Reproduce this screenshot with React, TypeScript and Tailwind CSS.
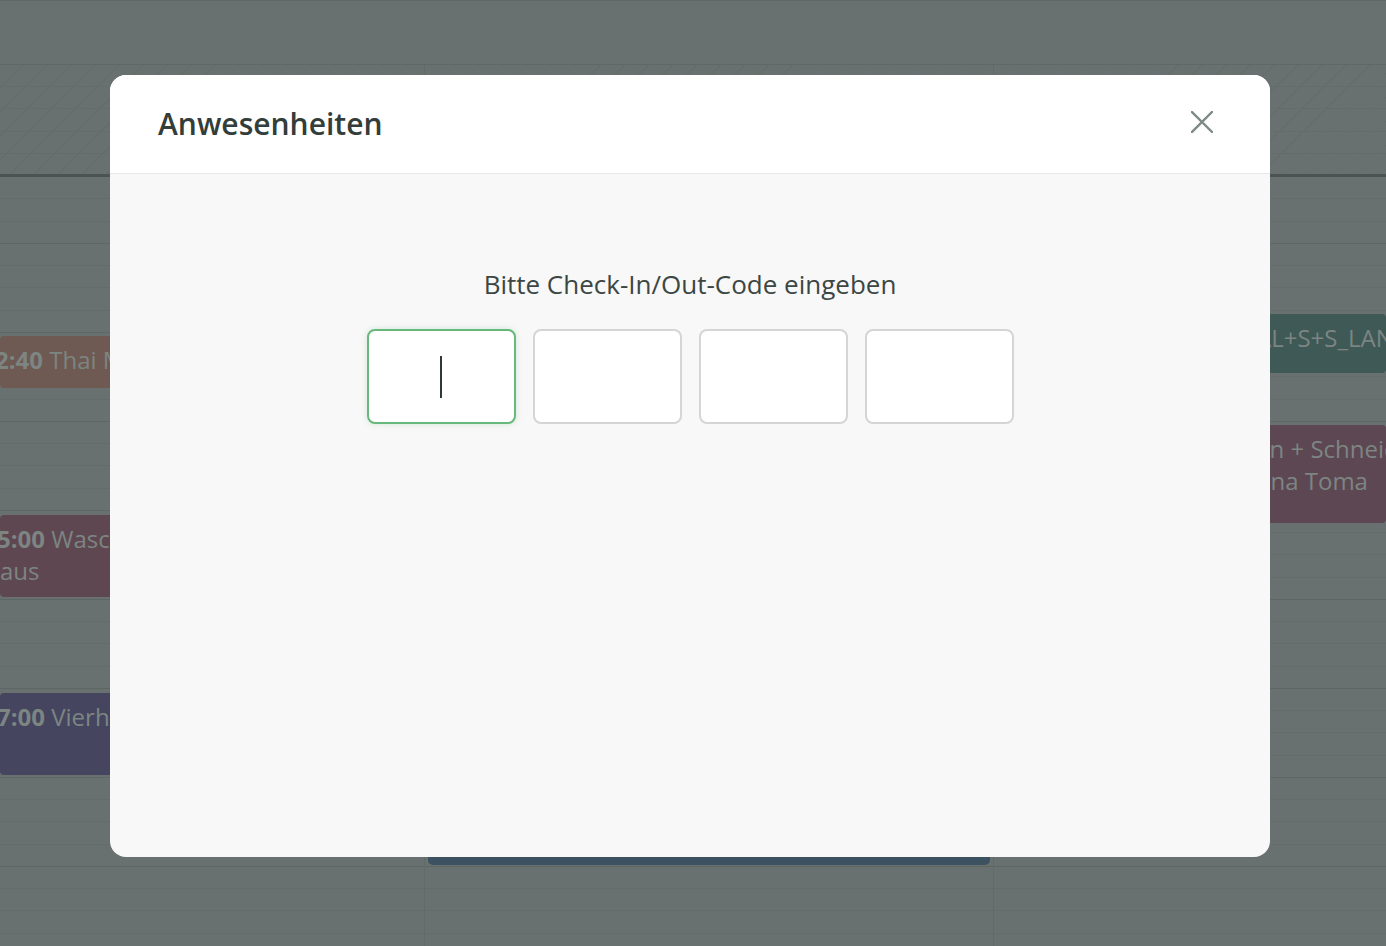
import React from "react";

const BODY_ROWS = Array.from({ length: 35 }, (_, i) => i);

function EventBlock({
  className,
  lines,
}: {
  className: string;
  lines: { time?: string; text: string; offset: string }[];
}) {
  return (
    <div className={`absolute overflow-hidden rounded-[4px] pt-[8px] text-[24px] leading-[32px] text-[#7c8582] ${className}`}>
      {lines.map((l, i) => (
        <div key={i} className={`whitespace-nowrap ${l.offset}`}>
          {l.time && <span className="font-bold">{l.time} </span>}
          {l.text}
        </div>
      ))}
    </div>
  );
}

export default function App() {
  return (
    <div className="relative h-[946px] w-[1386px] overflow-hidden bg-[#687170] font-['Open_Sans',sans-serif]">
      {/* Calendar background */}
      <div className="flex flex-col">
        <div className="h-[65px] shrink-0 border-y border-[#5f6865]" />
        <div className="relative">
          <div className="h-[109px] bg-[repeating-linear-gradient(135deg,transparent_0px,transparent_16px,#646d6a_16px,#646d6a_17px)]">
            <div className="h-[22px] border-b border-[#646d6a]" />
            <div className="h-[22px] border-b border-[#646d6a]" />
            <div className="h-[23px] border-b border-[#646d6a]" />
            <div className="h-[22px] border-b border-[#646d6a]" />
          </div>
          <div className="h-[3px] bg-[#4c5451]" />
          {BODY_ROWS.map((i) => (
            <div
              key={i}
              className={`h-[22.25px] border-b ${i % 4 === 2 ? "border-[#5d6663]" : "border-[#636c69]"}`}
            />
          ))}

          {/* columns with events */}
          <div className="absolute inset-0 grid grid-cols-[424px_569px_1fr]">
            <div className="relative">
              <EventBlock
                className="left-0 right-[4px] top-[271px] h-[52px] bg-[#6f5953]"
                lines={[{ time: "2:40", text: "Thai Massage", offset: "-ml-[5px]" }]}
              />
              <EventBlock
                className="left-0 right-[4px] top-[450px] h-[82px] bg-[#5e4751]"
                lines={[
                  { time: "5:00", text: "Waschküche Gemeinde-", offset: "-ml-[3px]" },
                  { text: "aus", offset: "ml-0" },
                ]}
              />
              <EventBlock
                className="left-0 right-[4px] top-[628px] h-[82px] bg-[#45455f]"
                lines={[{ time: "7:00", text: "Vierhändig Klavier", offset: "-ml-[3px]" }]}
              />
            </div>
            <div className="relative border-l border-[#636b68]">
              <div className="absolute left-[3px] right-[3px] top-[535px] h-[265px] rounded-[5px] bg-[#3d5261]" />
            </div>
            <div className="relative border-l border-[#636b68]">
              <EventBlock
                className="left-[3px] right-0 top-[249px] h-[59px] bg-[#3f5957]"
                lines={[{ text: "AL+S+S_LAND", offset: "ml-[259px]" }]}
              />
              <EventBlock
                className="left-[3px] right-0 top-[360px] h-[98px] bg-[#5d4752]"
                lines={[
                  { text: "en + Schneider", offset: "ml-[259px]" },
                  { text: "ona Toma", offset: "ml-[259px]" },
                ]}
              />
            </div>
          </div>
        </div>
      </div>

      {/* Modal */}
      <div className="absolute inset-0 flex pl-[110px] pt-[75px]">
        <div className="flex h-[782px] w-[1160px] flex-col overflow-hidden rounded-2xl bg-[#f8f8f8]">
          <div className="flex h-[99px] shrink-0 items-center justify-between border-b border-[#e6e7e7] bg-white pl-12 pr-[57px]">
            <h2 className="text-[30px] font-semibold leading-[40px] text-[#333d3a]">Anwesenheiten</h2>
            <svg width="22" height="22" viewBox="0 0 22 22" className="-mt-[4px]" fill="none">
              <path d="M1 1L21 21M21 1L1 21" stroke="#7d8a87" strokeWidth="2.4" strokeLinecap="square" />
            </svg>
          </div>
          <div className="flex flex-col items-center pt-[92px]">
            <p className="text-[26px] leading-[36px] text-[#3c4744]">Bitte Check-In/Out-Code eingeben</p>
            <div className="mt-[27px] flex gap-[17px]">
              <div className="flex h-[95px] w-[149px] items-center justify-center rounded-lg border-2 border-[#66b97b] bg-white shadow-[0_0_6px_rgba(102,185,123,0.25)]">
                <div className="h-[42px] w-[2px] bg-[#2f3a37]" />
              </div>
              <div className="h-[95px] w-[149px] rounded-lg border-2 border-[#d3d6d5] bg-white" />
              <div className="h-[95px] w-[149px] rounded-lg border-2 border-[#d3d6d5] bg-white" />
              <div className="h-[95px] w-[149px] rounded-lg border-2 border-[#d3d6d5] bg-white" />
            </div>
          </div>
        </div>
      </div>
    </div>
  );
}
